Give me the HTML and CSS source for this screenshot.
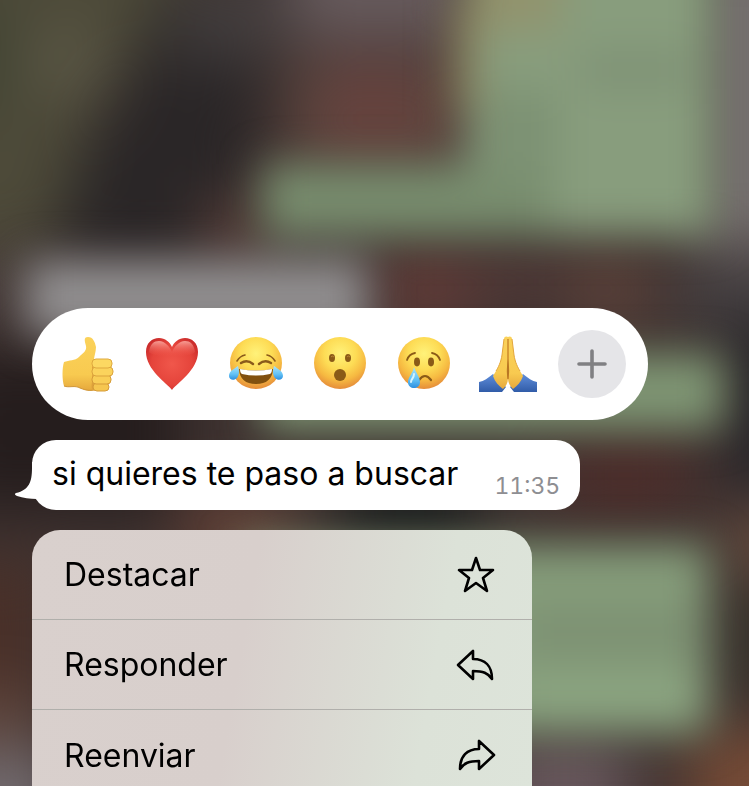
FILE: index.html
```html
<!DOCTYPE html>
<html lang="es">
<head>
  <meta charset="UTF-8" />
  <meta name="viewport" content="width=device-width, initial-scale=1" />
  <title>Chat</title>
  <link rel="stylesheet" href="styles.css">
</head>
<body>
  <!-- blurred chat behind the menu -->
  <svg class="backdrop" viewBox="0 0 749 786" preserveAspectRatio="none" aria-hidden="true">
    <defs>
      <filter id="soft" x="-50%" y="-50%" width="200%" height="200%" color-interpolation-filters="sRGB"><feGaussianBlur stdDeviation="30" /></filter>
      <filter id="bubbleBlur" x="-30%" y="-60%" width="160%" height="220%" color-interpolation-filters="sRGB"><feGaussianBlur stdDeviation="21" /></filter>
    </defs>
    <rect width="749" height="786" fill="#3f3331" />
    <g filter="url(#soft)">
      <path d="M-80 -80H210L160 20L95 115L50 250H-80Z" fill="#4d4a39" />
      <circle cx="68" cy="62" r="36" fill="#5c5947" />
      <rect x="-60" y="0" width="70" height="110" fill="#414433" />
      <path d="M170 -20H290L270 60L230 260H50L80 160L130 80Z" fill="#2a2627" />
      <path d="M190 -20H290L270 60H170Z" fill="#433e3e" />
      <rect x="290" y="-70" width="180" height="110" fill="#675b5d" />
      <rect x="290" y="60" width="180" height="120" fill="#5f463f" />
      <ellipse cx="372" cy="105" rx="42" ry="48" fill="#68423e" />
      <rect x="205" y="205" width="60" height="50" fill="#65463f" />
      <rect x="-60" y="260" width="90" height="50" fill="#4b403e" />
      <rect x="-60" y="350" width="240" height="160" fill="#251d1d" />
      <rect x="380" y="255" width="90" height="70" fill="#643c38" />
      <rect x="470" y="255" width="90" height="50" fill="#513937" />
      <rect x="570" y="255" width="80" height="70" fill="#5d423a" />
      <rect x="700" y="-60" width="110" height="310" fill="#766f70" />
      <rect x="680" y="265" width="130" height="60" fill="#454143" />
      <rect x="725" y="320" width="90" height="180" fill="#28262a" />
      <rect x="560" y="440" width="130" height="70" fill="#4e2d2a" />
      <rect x="180" y="500" width="110" height="60" fill="#674237" />
      <rect x="340" y="485" width="140" height="55" fill="#101718" />
      <rect x="-60" y="560" width="100" height="130" fill="#4a3028" />
      <rect x="-60" y="690" width="100" height="50" fill="#64493f" />
      <rect x="-60" y="750" width="120" height="100" fill="#736c70" />
      <rect x="725" y="510" width="90" height="60" fill="#6a4d3f" />
      <rect x="730" y="590" width="80" height="100" fill="#37332b" />
      <rect x="500" y="740" width="130" height="100" fill="#69595e" />
      <rect x="690" y="730" width="140" height="130" fill="#764b36" />
    </g>
    <g filter="url(#bubbleBlur)">
      <path d="M466 -60H716V236H262V164H466Z" fill="#889d7d" />
      <rect x="262" y="166" width="290" height="70" fill="#788d6e" />
      <rect x="485" y="90" width="70" height="90" fill="#7c9173" />
      <rect x="470" y="-60" width="90" height="90" fill="#92936d" />
      <rect x="452" y="0" width="24" height="110" fill="#8b815d" />
      <rect x="580" y="50" width="110" height="40" fill="#7f9276" />
      <rect x="26" y="260" width="342" height="76" fill="#918f90" />
      <rect x="262" y="354" width="462" height="76" fill="#7f9674" />
      <path d="M240 544H710V734H240Z" fill="#859c7a" />
      <rect x="520" y="610" width="180" height="44" fill="#7c9072" />
      <rect x="520" y="680" width="180" height="40" fill="#8ca682" />
    </g>
  </svg>

  <!-- fills shared by the emoji -->
  <svg class="defs" aria-hidden="true">
    <defs>
      <radialGradient id="face" cx="50%" cy="32%" r="68%">
        <stop offset="0" stop-color="#fff27a" />
        <stop offset="0.45" stop-color="#fddc55" />
        <stop offset="0.75" stop-color="#f6b941" />
        <stop offset="1" stop-color="#e58c3a" />
      </radialGradient>
      <linearGradient id="skin" x1="0" y1="0" x2="0" y2="1">
        <stop offset="0" stop-color="#fbd25a" />
        <stop offset="0.7" stop-color="#f8ca50" />
        <stop offset="1" stop-color="#e6a83c" />
      </linearGradient>
      <radialGradient id="heart" cx="50%" cy="50%" r="60%">
        <stop offset="0" stop-color="#f0574b" />
        <stop offset="0.65" stop-color="#e5443b" />
        <stop offset="1" stop-color="#c92a2a" />
      </radialGradient>
      <linearGradient id="shine" x1="0" y1="0" x2="0" y2="1">
        <stop offset="0" stop-color="#ffb8ae" stop-opacity="0.8" />
        <stop offset="1" stop-color="#f4574b" stop-opacity="0" />
      </linearGradient>
      <linearGradient id="tear" x1="0" y1="0" x2="0" y2="1">
        <stop offset="0" stop-color="#a9e4fb" />
        <stop offset="0.6" stop-color="#62c1f5" />
        <stop offset="1" stop-color="#2d8fe0" />
      </linearGradient>
      <linearGradient id="sleeve" x1="0" y1="0" x2="0" y2="1">
        <stop offset="0" stop-color="#5f8edb" />
        <stop offset="1" stop-color="#315ca8" />
      </linearGradient>
    </defs>
  </svg>

  <main class="overlay">
    <div class="reactions">
      <button class="reaction" aria-label="Me gusta">
        <svg viewBox="0 0 60 60">
          <path d="M6 28C11 26 17 27 21 23C25 19 29 17 28 12C27 8 25 3 30 3C35 3 37 8 38 13C38 18 36 22 36 26L44 32V52C38 59 29 57 22 54C17 51 11 54 6 52C4 46 4 34 6 28Z" fill="url(#skin)" />
          <path d="M6 52C11 54 17 51 22 54C29 57 34 57 38 55" fill="none" stroke="#cf9435" stroke-width="1" />
          <path d="M35 26C33 33 35 39 34 46C34 50 33 53 34 55H43V26Z" fill="#dda03a" />
          <rect x="35" y="49" width="16" height="8" rx="4" fill="#f6c64f" stroke="#d69b38" />
          <rect x="34" y="41" width="19" height="9" rx="4" fill="#f9ce56" stroke="#d69b38" />
          <rect x="34" y="33" width="21" height="9" rx="4" fill="#fbd35c" stroke="#dba33c" />
          <rect x="34" y="25" width="20" height="9" rx="4" fill="#fcd862" stroke="#dfa93e" />
        </svg>
      </button>
      <button class="reaction" aria-label="Me encanta">
        <svg viewBox="0 0 60 60">
          <path d="M30 56C25 49 4 36 4 18C4 9 10 4 17 4C23 4 28 8 30 13C32 8 37 4 43 4C50 4 56 9 56 18C56 36 35 49 30 56Z" fill="url(#heart)" />
          <path d="M7 18C8 10 12 7 17 7C23 7 28 13 30 18C32 13 37 7 43 7C48 7 52 10 53 18C49 24 11 24 7 18Z" fill="url(#shine)" />
        </svg>
      </button>
      <button class="reaction" aria-label="Me divierte">
        <svg viewBox="0 0 60 60">
          <circle cx="30" cy="29" r="26" fill="url(#face)" />
          <g fill="none" stroke="#8a5a1b" stroke-linecap="round">
            <path d="M11 27Q14 22 19 21M49 27Q46 22 41 21" stroke-width="1.6" />
            <path d="M15 29Q21 25 27 30M45 29Q39 25 33 30" stroke-width="2.4" />
          </g>
          <path d="M13 35Q30 38 47 35Q46 50 30 50Q14 50 13 35Z" fill="#81500f" />
          <path d="M14 35Q30 38 46 35Q46 39 44 40Q30 43 16 40Q14 39 14 35Z" fill="#fff" />
          <path d="M12 32C13 36 14 40 11 44C8 47 3 46 3 42C3 37 8 35 12 32Z" fill="url(#tear)" />
          <path d="M48 32C47 36 46 40 49 44C52 47 57 46 57 42C57 37 52 35 48 32Z" fill="url(#tear)" />
        </svg>
      </button>
      <button class="reaction" aria-label="Me asombra">
        <svg viewBox="0 0 60 60">
          <circle cx="30" cy="29" r="26" fill="url(#face)" />
          <g fill="#8a5a17">
            <ellipse cx="22" cy="24" rx="3" ry="4" />
            <ellipse cx="38" cy="24" rx="3" ry="4" />
            <circle cx="30" cy="41" r="6" />
          </g>
          <path d="M21 23Q22 21 24 23M37 23Q38 21 40 23" fill="none" stroke="#b98432" stroke-width="1" />
        </svg>
      </button>
      <button class="reaction" aria-label="Me entristece">
        <svg viewBox="0 0 60 60">
          <circle cx="30" cy="29" r="26" fill="url(#face)" />
          <ellipse cx="23" cy="28" rx="3" ry="4.4" fill="#8a5a17" />
          <ellipse cx="37" cy="28" rx="3" ry="4.4" fill="#8a5a17" />
          <g fill="none" stroke="#8a5a17" stroke-width="1.8" stroke-linecap="round">
            <path d="M13 26Q15 20 21 19M38 19Q44 20 46 26" />
            <path d="M25 46Q31 38 37 46" stroke-width="2.2" />
          </g>
          <path d="M20 33C22 39 26 43 26 48C26 52 23 54 20 54C17 54 14 52 14 48C14 43 19 39 20 33Z" fill="url(#tear)" />
          <path d="M20 40C20 44 17 45 17 48" fill="none" stroke="#d6f3fd" stroke-width="2" stroke-linecap="round" />
        </svg>
      </button>
      <button class="reaction" aria-label="Gracias">
        <svg viewBox="0 0 60 60">
          <path d="M1 48C6 47 10 44 15 40L28 53L24 58H1Z" fill="url(#sleeve)" />
          <path d="M59 48C54 47 50 44 45 40L32 53L36 58H59Z" fill="url(#sleeve)" />
          <path d="M30 3C29 2 26 2 26 5L24 21C23 28 20 34 18 37L15 42C17 48 21 52 25 55C28 52 30 49 30 44Z" fill="url(#skin)" />
          <path d="M30 3C31 2 34 2 34 5L36 21C37 28 40 34 42 37L45 42C43 48 39 52 35 55C32 52 30 49 30 44Z" fill="url(#skin)" />
          <path d="M30 5V45" fill="none" stroke="#c98528" stroke-width="1.4" />
          <path d="M26 5L24 21C23 28 20 34 18 37M34 5L36 21C37 28 40 34 42 37" fill="none" stroke="#e3a63b" stroke-width="1" />
          <path d="M30 25C29 32 28 38 30 46C32 38 31 32 30 25Z" fill="#b97724" />
        </svg>
      </button>
      <button class="reaction more" aria-label="Más reacciones">
        <svg viewBox="0 0 60 60">
          <path d="M30 17V43M17 30H43" fill="none" stroke="#808083" stroke-width="3.6" stroke-linecap="round" />
        </svg>
      </button>
    </div>

    <div class="message">
      <svg class="tail" viewBox="0 0 30 40" aria-hidden="true">
        <path d="M17 0V6C17 20 14 28 1 31C-1 32 0 33 2 34C8 36 15 37 22 37L30 20V0Z" fill="#fff" />
      </svg>
      <span class="text">si quieres te paso a buscar</span>
      <time class="timestamp">11:35</time>
    </div>

    <div class="menu">
      <button class="item">
        <span>Destacar</span>
        <svg viewBox="0 0 40 40"><path d="M20 3L24 15H37L27 23L31 36L20 28L9 36L13 23L3 15H16Z" /></svg>
      </button>
      <button class="item">
        <span>Responder</span>
        <svg viewBox="0 0 40 40"><path d="M2 20L17 6V14C29 14 36 21 36 34C32 28 27 26 17 26V34Z" /></svg>
      </button>
      <button class="item">
        <span>Reenviar</span>
        <svg viewBox="0 0 40 40"><path d="M38 20L23 6V14C11 14 4 21 4 34C8 28 13 26 23 26V34Z" /></svg>
      </button>
    </div>
  </main>
</body>
</html>
```

FILE: styles.css
```css
* {
  box-sizing: border-box;
}
body {
  font-family: Inter, "Liberation Sans", sans-serif;
  background: #3a2e2c;
  color: #000;
  margin: 0;
}
button {
  font: inherit;
  color: inherit;
  background: none;
  border: 0;
  padding: 0;
  cursor: pointer;
}
.backdrop {
  position: fixed;
  inset: 0;
  width: 100%;
  height: 100%;
}
.defs {
  position: absolute;
  width: 0;
  height: 0;
}
.overlay {
  position: relative;
  display: flex;
  flex-direction: column;
  align-items: flex-start;
  gap: 20px;
  height: 100vh;
  padding: 308px 32px 0;
  overflow: hidden;
}
.reactions {
  display: flex;
  flex-shrink: 0;
  gap: 16px;
  padding: 22px;
  background: #fff;
  border-radius: 56px;
}
.reaction {
  display: flex;
  align-items: center;
  justify-content: center;
  width: 68px;
  height: 68px;
  border-radius: 50%;
}
.reaction svg {
  width: 60px;
  height: 60px;
}
.more {
  background: #e5e5e8;
}
.message {
  position: relative;
  display: flex;
  flex-shrink: 0;
  align-items: flex-end;
  gap: 36px;
  padding: 10px 20px 12px;
  background: #fff;
  border-radius: 24px;
}
.tail {
  position: absolute;
  left: -17px;
  bottom: 8px;
  width: 30px;
  height: 40px;
}
.text {
  font-size: 32px;
  line-height: 48px;
}
.timestamp {
  font-size: 23px;
  line-height: 24px;
  font-variant-numeric: tabular-nums;
  color: #8e8e92;
}
.menu {
  flex-shrink: 0;
  width: 500px;
  max-width: 100%;
  border-radius: 28px 28px 0 0;
  overflow: hidden;
  background: linear-gradient(100deg, #d9d0cd 0%, #d8cfcc 42%, #dce2d8 78%, #dde4da 100%);
}
.item {
  display: flex;
  align-items: center;
  justify-content: space-between;
  width: 100%;
  height: 90px;
  padding: 0 36px 0 32px;
  border-bottom: 1px solid #b0afab;
  font-size: 32px;
}
.item:last-child {
  border-bottom: 0;
}
.item svg {
  width: 40px;
  height: 40px;
  fill: none;
  stroke: #000;
  stroke-width: 2.6;
  stroke-linejoin: round;
}
```
